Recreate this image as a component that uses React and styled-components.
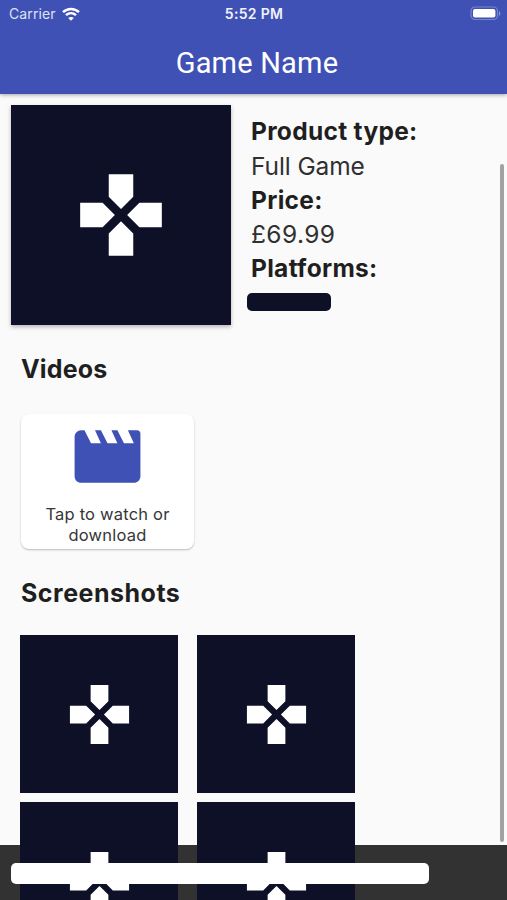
import React from 'react';
import styled, { createGlobalStyle } from 'styled-components';

const GlobalStyle = createGlobalStyle`
  * { box-sizing: border-box; }
  body { margin: 0; background: #fafafa; }
`;

const Screen = styled.main`
  position: relative;
  display: flex;
  flex-direction: column;
  width: 507px;
  height: 900px;
  overflow: hidden;
  background: #fafafa;
  color: #1f1f1f;
  font-family: Inter, 'Liberation Sans', sans-serif;
`;

const Header = styled.header`
  flex: none;
  height: 94px;
  background: #3f51b5;
  color: #fff;
  box-shadow: 0 1px 4px rgba(0, 0, 0, 0.35);
`;

const StatusBar = styled.div`
  display: grid;
  grid-template-columns: 1fr auto 1fr;
  align-items: center;
  height: 27px;
  padding: 0 8px 0 9px;
`;

const Carrier = styled.div`
  display: flex;
  align-items: center;
  gap: 6px;
  color: #dfe2f4;
  font-size: 14px;
  letter-spacing: 0.1px;
`;

const Clock = styled.time`
  font-size: 14px;
  font-weight: 600;
  letter-spacing: 0.3px;
  color: #f1f2fa;
`;

const BatterySlot = styled.div`
  display: flex;
  justify-content: flex-end;
  margin-right: -2px;
`;

const Title = styled.h1`
  margin: 0;
  padding: 19px 0 0 7px;
  text-align: center;
  font: 400 29px/34px Roboto, sans-serif;
  letter-spacing: 0.2px;
`;

const Content = styled.div`
  flex: 1;
  min-height: 0;
`;

const Summary = styled.section`
  display: flex;
  gap: 20px;
  padding: 11px 0 0 11px;
`;

const Tile = styled.div`
  flex: none;
  display: flex;
  align-items: center;
  justify-content: center;
  width: ${(p) => p.$size}px;
  height: ${(p) => p.$size}px;
  background: #0d1027;
  box-shadow: ${(p) => (p.$raised ? '0 2px 4px rgba(40, 10, 50, 0.3)' : 'none')};
`;

const Details = styled.dl`
  margin: 0;
  padding-top: 9.4px;
  font-size: 24.5px;
  line-height: 34.2px;
`;

const Term = styled.dt`
  font-weight: 700;
  letter-spacing: 0.3px;
`;

const Value = styled.dd`
  margin: 0;
  color: #303030;
  letter-spacing: ${(p) => (p.$numeric ? '0.4px' : '-0.1px')};
`;

const PlatformChip = styled.dd`
  width: 84px;
  height: 18px;
  margin: 7.6px 0 0 -4px;
  border-radius: 5px;
  background: #0d1027;
`;

const SectionTitle = styled.h2`
  margin: 0;
  padding: ${(p) => p.$top}px 0 0 21px;
  font-size: 25px;
  line-height: 34px;
  font-weight: 700;
  letter-spacing: ${(p) => p.$tracking}px;
`;

const VideoCard = styled.button`
  display: flex;
  flex-direction: column;
  align-items: center;
  width: 173px;
  height: 135px;
  margin: 28px 0 0 21px;
  padding: 3px 0 0;
  border: 0;
  border-radius: 8px;
  background: #fff;
  box-shadow: 0 1px 2px rgba(0, 0, 0, 0.26);
  color: #363636;
  font: 400 16.5px/21px Inter, sans-serif;
  letter-spacing: 0.2px;
`;

const CardLabel = styled.span`
  width: 140px;
  margin-top: 8px;
`;

const Gallery = styled.div`
  position: relative;
  z-index: 2;
  display: grid;
  grid-template-columns: repeat(2, 158px);
  gap: 9px 19px;
  padding: 25px 0 0 20px;
`;

const Scrollbar = styled.div`
  position: absolute;
  top: 164px;
  right: 3px;
  width: 4px;
  height: 678px;
  border-radius: 2px;
  background: #a2a2a2;
`;

const BottomBar = styled.footer`
  position: absolute;
  inset: 845px 0 0;
  z-index: 1;
  background: #323232;
`;

const Message = styled.div`
  position: absolute;
  top: 863px;
  left: 11px;
  z-index: 3;
  width: 418px;
  height: 21px;
  border-radius: 5px;
  background: #fff;
`;

const DPad = ({ size }) => (
  <svg width={size} height={size} viewBox="0 0 24 24" fill="#fff" aria-hidden="true">
    <path d="M15 7.5V2H9v5.5l3 3 3-3zM7.5 9H2v6h5.5l3-3-3-3zM9 16.5V22h6v-5.5l-3-3-3 3zM16.5 9l-3 3 3 3H22V9h-5.5z" />
  </svg>
);

const Clapper = () => (
  <svg width="79" height="79" viewBox="0 0 24 24" fill="#3f51b5" aria-hidden="true">
    <path d="M18.2 4l1.8 4h-3l-2-4h-1.8l1.8 4h-3l-2-4H8.2l1.8 4H7L5 4H4c-1.1 0-1.99.9-1.99 2L2 18c0 1.1.9 2 2 2h16c1.1 0 2-.9 2-2V5c0-.6-.4-1-1-1h-2.8z" />
  </svg>
);

const Wifi = () => (
  <svg width="18" height="14" viewBox="0 0 18 14" fill="none" stroke="#fff" strokeWidth="2.5" aria-hidden="true">
    <path d="M1 5.1C5.5 .8 12.5 .8 17 5.1" />
    <path d="M4 8.2c2.9-2.7 7.1-2.7 10 0" />
    <path d="M9 13.8L6.2 11c1.5-1.4 4.1-1.4 5.6 0z" fill="#fff" stroke="none" />
  </svg>
);

const Battery = () => (
  <svg width="31" height="15" viewBox="0 0 31 15" aria-hidden="true">
    <rect x="1" y="1" width="26.5" height="12.5" rx="4" fill="none" stroke="#7885ca" strokeWidth="1.2" />
    <rect x="3" y="3" width="22.4" height="8.6" rx="2" fill="#fff" />
    <path d="M29 5.2c1.8.7 1.8 3.9 0 4.6z" fill="#8c97d3" />
  </svg>
);

const shots = [1, 2, 3, 4];

export default function App() {
  return (
    <Screen>
      <GlobalStyle />
      <Header>
        <StatusBar>
          <Carrier>Carrier <Wifi /></Carrier>
          <Clock>5:52 PM</Clock>
          <BatterySlot><Battery /></BatterySlot>
        </StatusBar>
        <Title>Game Name</Title>
      </Header>
      <Content>
        <Summary>
          <Tile $size={220} $raised><DPad size={98} /></Tile>
          <Details>
            <Term>Product type:</Term>
            <Value>Full Game</Value>
            <Term>Price:</Term>
            <Value $numeric>£69.99</Value>
            <Term>Platforms:</Term>
            <PlatformChip />
          </Details>
        </Summary>
        <SectionTitle $top={27} $tracking={0.15}>Videos</SectionTitle>
        <VideoCard>
          <Clapper />
          <CardLabel>Tap to watch or download</CardLabel>
        </VideoCard>
        <SectionTitle $top={27} $tracking={0.5}>Screenshots</SectionTitle>
        <Gallery>
          {shots.map((id) => (
            <Tile key={id} $size={158}><DPad size={71} /></Tile>
          ))}
        </Gallery>
      </Content>
      <Scrollbar />
      <BottomBar />
      <Message />
    </Screen>
  );
}
